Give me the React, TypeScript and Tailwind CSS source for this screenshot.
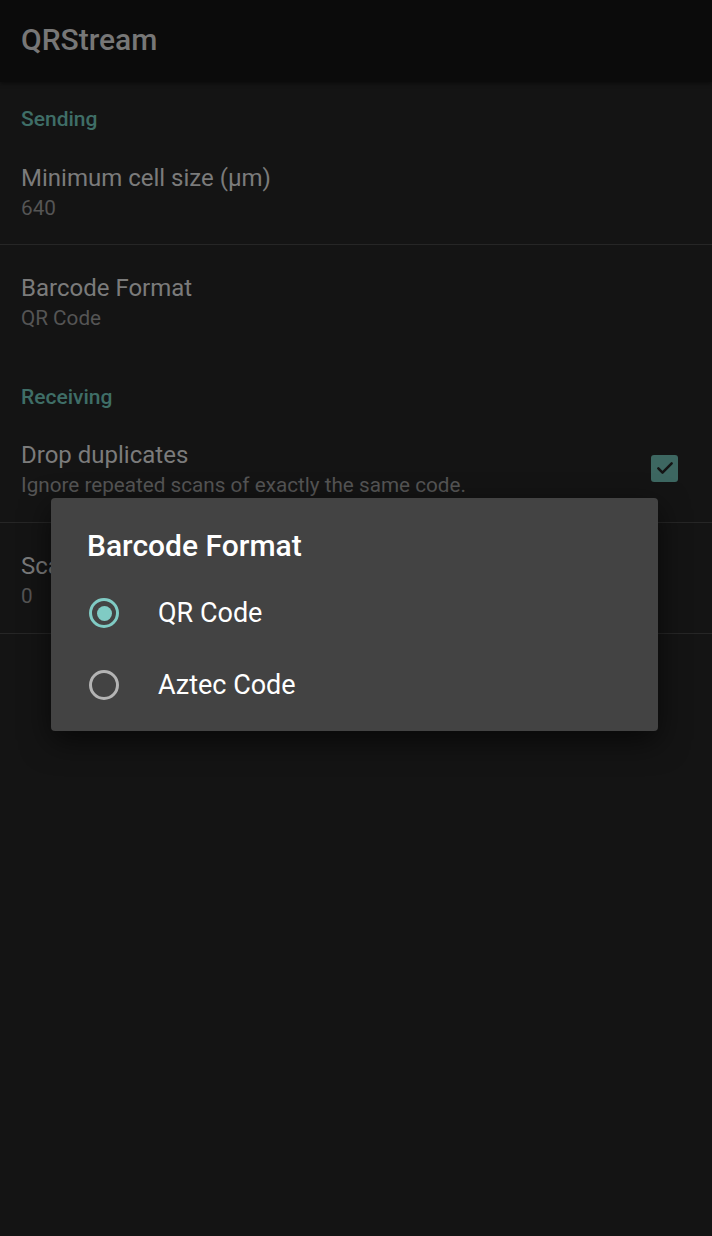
export default function App() {
  const font = { fontFamily: "Roboto, 'Noto Sans', sans-serif" };
  return (
    <div className="relative w-[712px] h-[1236px] bg-[#141414] overflow-hidden" style={font}>
      {/* App bar */}
      <div className="h-[82px] bg-[#0b0b0b] flex items-center px-[21px] shadow-[0_2px_4px_rgba(0,0,0,0.4)]">
        <div className="text-[30px] font-medium text-[#777777] leading-none -mt-[3px]">QRStream</div>
      </div>

      {/* Preferences */}
      <div className="pt-[24px]">
        <div className="px-[21px] h-[28px] flex items-center text-[21px] font-medium text-[#3f6e67]">Sending</div>
        <div className="px-[21px] pt-[29px] pb-[21px] border-b border-[#262626]">
          <div className="text-[24px] leading-[30px] text-[#7b7b7b]">Minimum cell size (µm)</div>
          <div className="text-[20.7px] leading-[30px] text-[#555555]">640</div>
        </div>
        <div className="px-[21px] pt-[28px] pb-[51px]">
          <div className="text-[24px] leading-[30px] text-[#7b7b7b]">Barcode Format</div>
          <div className="text-[20.7px] leading-[30px] text-[#555555]">QR Code</div>
        </div>
        <div className="px-[21px] h-[28px] flex items-center text-[21px] font-medium text-[#3f6e67]">Receiving</div>
        <div className="pl-[21px] pr-[34px] pt-[28px] pb-[22px] border-b border-[#262626] flex items-center justify-between">
          <div>
            <div className="text-[24px] leading-[30px] text-[#7b7b7b]">Drop duplicates</div>
            <div className="text-[20.7px] leading-[30px] text-[#555555]">Ignore repeated scans of exactly the same code.</div>
          </div>
          <div className="w-[27px] h-[27px] rounded-[3px] bg-[#3d6761] flex items-center justify-center -mt-[4px]">
            <svg width="20" height="20" viewBox="0 0 24 24" fill="none" stroke="#141414" strokeWidth="3" strokeLinecap="round" strokeLinejoin="round">
              <path d="M4 12.5l5 5L20 6.5" />
            </svg>
          </div>
        </div>
        <div className="px-[21px] pt-[28px] pb-[22px] border-b border-[#262626]">
          <div className="text-[24px] leading-[30px] text-[#7b7b7b]">Scan history</div>
          <div className="text-[20.7px] leading-[30px] text-[#555555]">0</div>
        </div>
      </div>

      {/* Dialog */}
      <div className="absolute left-[51px] top-[498px] w-[607px] h-[233px] bg-[#434343] rounded-[4px] shadow-[0_10px_30px_rgba(0,0,0,0.6)]">
        <div className="pl-[36px] pt-[30px] text-[30px] leading-[36px] font-medium text-white">Barcode Format</div>
        <div className="mt-[13px]">
          <div className="h-[72px] flex items-center pl-[38px]">
            <div className="w-[30px] h-[30px] rounded-full border-[3px] border-[#80cbc4] flex items-center justify-center">
              <div className="w-[15px] h-[15px] rounded-full bg-[#80cbc4]" />
            </div>
            <div className="ml-[39px] text-[27px] text-white">QR Code</div>
          </div>
          <div className="h-[72px] flex items-center pl-[38px]">
            <div className="w-[30px] h-[30px] rounded-full border-[3px] border-[#b4b4b4]" />
            <div className="ml-[39px] text-[27px] text-white">Aztec Code</div>
          </div>
        </div>
      </div>
    </div>
  );
}
